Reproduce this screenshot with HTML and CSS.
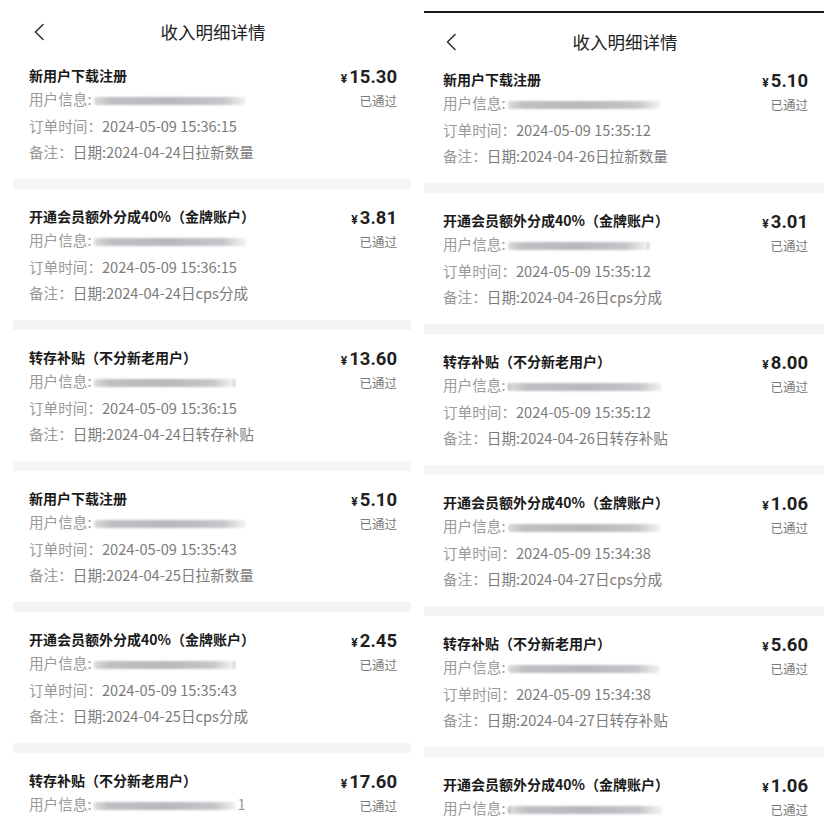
FILE: index.html
```html
<!DOCTYPE html>
<html lang="zh-CN">
<head>
<meta charset="utf-8">
<title>收入明细详情</title>
<link rel="stylesheet" href="styles.css">
</head>
<body>
<div class="page">
  <section class="panel panel-left">
    <header class="nav">
      <svg class="back" width="12" height="18" viewBox="0 0 12 18"><polyline points="10,1.5 2.5,9 10,16.5" fill="none" stroke="#333" stroke-width="1.6" stroke-linecap="round" stroke-linejoin="round"/></svg>
      <div class="nav-title">收入明细详情</div>
    </header>

    <div class="card">
      <div class="info">
        <div class="title">新用户下载注册</div>
        <div class="row">用户信息:<span class="mask"></span></div>
        <div class="row">订单时间：<span class="val">2024-05-09 15:36:15</span></div>
        <div class="row">备注：<span class="val">日期:2024-04-24日拉新数量</span></div>
      </div>
      <div class="money"><div class="amount"><span class="yen">¥</span>15.30</div><div class="status">已通过</div></div>
    </div>
    <div class="sep"></div>

    <div class="card">
      <div class="info">
        <div class="title">开通会员额外分成40%（金牌账户）</div>
        <div class="row">用户信息:<span class="mask"></span></div>
        <div class="row">订单时间：<span class="val">2024-05-09 15:36:15</span></div>
        <div class="row">备注：<span class="val">日期:2024-04-24日cps分成</span></div>
      </div>
      <div class="money"><div class="amount"><span class="yen">¥</span>3.81</div><div class="status">已通过</div></div>
    </div>
    <div class="sep"></div>

    <div class="card">
      <div class="info">
        <div class="title">转存补贴（不分新老用户）</div>
        <div class="row">用户信息:<span class="mask mask-tick"></span></div>
        <div class="row">订单时间：<span class="val">2024-05-09 15:36:15</span></div>
        <div class="row">备注：<span class="val">日期:2024-04-24日转存补贴</span></div>
      </div>
      <div class="money"><div class="amount"><span class="yen">¥</span>13.60</div><div class="status">已通过</div></div>
    </div>
    <div class="sep"></div>

    <div class="card">
      <div class="info">
        <div class="title">新用户下载注册</div>
        <div class="row">用户信息:<span class="mask"></span></div>
        <div class="row">订单时间：<span class="val">2024-05-09 15:35:43</span></div>
        <div class="row">备注：<span class="val">日期:2024-04-25日拉新数量</span></div>
      </div>
      <div class="money"><div class="amount"><span class="yen">¥</span>5.10</div><div class="status">已通过</div></div>
    </div>
    <div class="sep"></div>

    <div class="card">
      <div class="info">
        <div class="title">开通会员额外分成40%（金牌账户）</div>
        <div class="row">用户信息:<span class="mask mask-tick"></span></div>
        <div class="row">订单时间：<span class="val">2024-05-09 15:35:43</span></div>
        <div class="row">备注：<span class="val">日期:2024-04-25日cps分成</span></div>
      </div>
      <div class="money"><div class="amount"><span class="yen">¥</span>2.45</div><div class="status">已通过</div></div>
    </div>
    <div class="sep"></div>

    <div class="card card-last">
      <div class="info">
        <div class="title">转存补贴（不分新老用户）</div>
        <div class="row">用户信息:<span class="mask mask-short"></span><span class="tail">1</span></div>
      </div>
      <div class="money"><div class="amount"><span class="yen">¥</span>17.60</div><div class="status">已通过</div></div>
    </div>
  </section>

  <section class="panel panel-right">
    <div class="topline"></div>
    <header class="nav nav-right">
      <svg class="back" width="12" height="18" viewBox="0 0 12 18"><polyline points="10,1.5 2.5,9 10,16.5" fill="none" stroke="#333" stroke-width="1.6" stroke-linecap="round" stroke-linejoin="round"/></svg>
      <div class="nav-title">收入明细详情</div>
    </header>

    <div class="card">
      <div class="info">
        <div class="title">新用户下载注册</div>
        <div class="row">用户信息:<span class="mask"></span></div>
        <div class="row">订单时间：<span class="val">2024-05-09 15:35:12</span></div>
        <div class="row">备注：<span class="val">日期:2024-04-26日拉新数量</span></div>
      </div>
      <div class="money"><div class="amount"><span class="yen">¥</span>5.10</div><div class="status">已通过</div></div>
    </div>
    <div class="sep"></div>

    <div class="card">
      <div class="info">
        <div class="title">开通会员额外分成40%（金牌账户）</div>
        <div class="row">用户信息:<span class="mask mask-tick"></span></div>
        <div class="row">订单时间：<span class="val">2024-05-09 15:35:12</span></div>
        <div class="row">备注：<span class="val">日期:2024-04-26日cps分成</span></div>
      </div>
      <div class="money"><div class="amount"><span class="yen">¥</span>3.01</div><div class="status">已通过</div></div>
    </div>
    <div class="sep"></div>

    <div class="card">
      <div class="info">
        <div class="title">转存补贴（不分新老用户）</div>
        <div class="row">用户信息:<span class="mask mask-lead"></span></div>
        <div class="row">订单时间：<span class="val">2024-05-09 15:35:12</span></div>
        <div class="row">备注：<span class="val">日期:2024-04-26日转存补贴</span></div>
      </div>
      <div class="money"><div class="amount"><span class="yen">¥</span>8.00</div><div class="status">已通过</div></div>
    </div>
    <div class="sep"></div>

    <div class="card">
      <div class="info">
        <div class="title">开通会员额外分成40%（金牌账户）</div>
        <div class="row">用户信息:<span class="mask"></span></div>
        <div class="row">订单时间：<span class="val">2024-05-09 15:34:38</span></div>
        <div class="row">备注：<span class="val">日期:2024-04-27日cps分成</span></div>
      </div>
      <div class="money"><div class="amount"><span class="yen">¥</span>1.06</div><div class="status">已通过</div></div>
    </div>
    <div class="sep"></div>

    <div class="card">
      <div class="info">
        <div class="title">转存补贴（不分新老用户）</div>
        <div class="row">用户信息:<span class="mask"></span></div>
        <div class="row">订单时间：<span class="val">2024-05-09 15:34:38</span></div>
        <div class="row">备注：<span class="val">日期:2024-04-27日转存补贴</span></div>
      </div>
      <div class="money"><div class="amount"><span class="yen">¥</span>5.60</div><div class="status">已通过</div></div>
    </div>
    <div class="sep"></div>

    <div class="card card-last">
      <div class="info">
        <div class="title">开通会员额外分成40%（金牌账户）</div>
        <div class="row">用户信息:<span class="mask mask-lead"></span></div>
      </div>
      <div class="money"><div class="amount"><span class="yen">¥</span>1.06</div><div class="status">已通过</div></div>
    </div>
  </section>
</div>
</body>
</html>
```

FILE: styles.css
```css
html, body {
  margin: 0;
  padding: 0;
  background: #ffffff;
}

body {
  font-family: "Noto Sans CJK SC", "Noto Sans", sans-serif;
  color: #1c1c1c;
  height: 832px;
  overflow: hidden;
}

.page {
  display: flex;
  gap: 12px;
  padding-left: 12px;
  height: 832px;
  overflow: hidden;
}

.panel {
  width: 400px;
  flex: none;
}

.topline {
  height: 2px;
  background: #1a1a1a;
  margin-top: 11px;
}

.nav {
  position: relative;
  height: 48px;
  box-sizing: border-box;
  padding-top: 20px;
}

.nav-right {
  height: 39px;
  padding-top: 17px;
}

.back {
  position: absolute;
  left: 21px;
  top: 23px;
}

.nav-right .back {
  top: 20px;
}

.nav-title {
  text-align: center;
  font-size: 17.5px;
  line-height: 24px;
  color: #222;
  padding-left: 2px;
}

.card {
  display: flex;
  justify-content: space-between;
  height: 131px;
  box-sizing: border-box;
  padding: 17px 15px 0 17px;
}

.card-last {
  height: 90px;
}

.panel-right .card {
  padding-left: 19px;
  padding-right: 16px;
}

.title {
  font-size: 14px;
  font-weight: 700;
  line-height: 20px;
  color: #1a1a1a;
}

.row {
  font-size: 14.6px;
  line-height: 26.5px;
  color: #9a9a9a;
  white-space: nowrap;
}

.val {
  color: #7c7c7c;
}

.row:nth-child(2) {
  margin-top: 1px;
}

.mask {
  display: inline-block;
  width: 152px;
  height: 8px;
  margin-left: 3px;
  vertical-align: middle;
  border-radius: 2px;
  background: linear-gradient(90deg, rgba(196,196,200,0.6) 0%, #c0c0c4 10%, #b8b8bc 50%, #c6c6ca 85%, rgba(225,225,228,0.4) 100%);
  filter: blur(1px);
}

.mask-tick {
  box-shadow: 1px 0 0 #aaa;
  width: 140px;
}

.mask-short {
  width: 142px;
}

.mask-lead {
  border-left: 2px solid #b0b0b0;
}

.tail {
  color: #999;
  margin-left: 1px;
}

.money {
  text-align: right;
  padding-top: 1px;
}

.amount {
  font-family: Roboto, "Noto Sans CJK SC", sans-serif;
  font-size: 18.5px;
  font-weight: 700;
  line-height: 22px;
  color: #1f1f1f;
  white-space: nowrap;
}

.yen {
  font-size: 12px;
  font-weight: 700;
  margin-right: 2px;
}

.status {
  font-size: 12.5px;
  line-height: 16px;
  margin-top: 3px;
  color: #7a7a7a;
}

.sep {
  height: 10px;
  background: #f4f5f7;
}

.panel-left .sep {
  margin-left: 1px;
  margin-right: 1px;
}
```
